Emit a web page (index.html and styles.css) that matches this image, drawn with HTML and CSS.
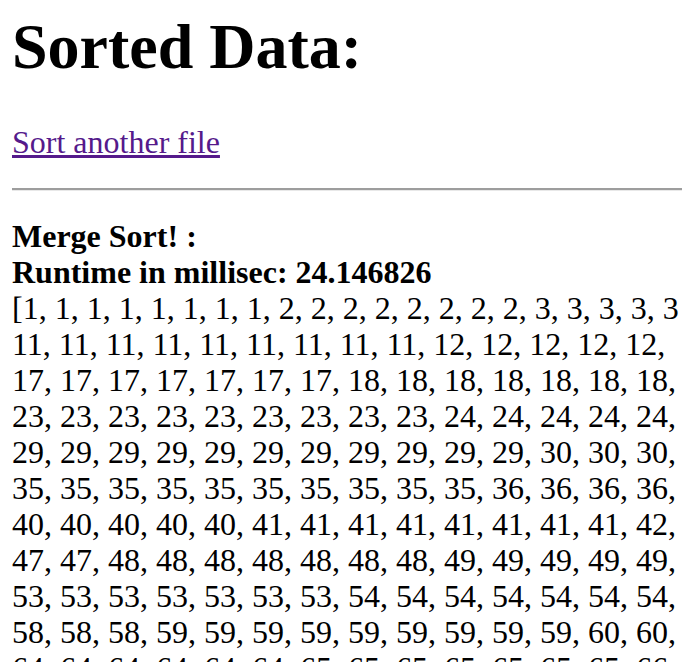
FILE: index.html
```html
<!DOCTYPE html>
<html lang="en">
<head>
<meta charset="utf-8">
<title>Sorted Data</title>
<link rel="stylesheet" href="styles.css">
</head>
<body>
<h1 class="title">Sorted Data:</h1>
<p class="back"><a class="back-link" href="#">Sort another file</a></p>
<hr class="rule">
<div class="result">
<b class="result-label">Merge Sort! :</b><br>
<b class="result-label">Runtime in millisec: 24.146826</b><br>
<div class="data">[1, 1, 1, 1, 1, 1, 1, 1, 2, 2, 2, 2, 2, 2, 2, 2, 3, 3, 3, 3, 3<br>11, 11, 11, 11, 11, 11, 11, 11, 11, 12, 12, 12, 12, 12,<br>17, 17, 17, 17, 17, 17, 17, 18, 18, 18, 18, 18, 18, 18,<br>23, 23, 23, 23, 23, 23, 23, 23, 23, 24, 24, 24, 24, 24,<br>29, 29, 29, 29, 29, 29, 29, 29, 29, 29, 29, 30, 30, 30,<br>35, 35, 35, 35, 35, 35, 35, 35, 35, 35, 36, 36, 36, 36,<br>40, 40, 40, 40, 40, 41, 41, 41, 41, 41, 41, 41, 41, 42,<br>47, 47, 48, 48, 48, 48, 48, 48, 48, 49, 49, 49, 49, 49,<br>53, 53, 53, 53, 53, 53, 53, 54, 54, 54, 54, 54, 54, 54,<br>58, 58, 58, 59, 59, 59, 59, 59, 59, 59, 59, 59, 60, 60,<br>64, 64, 64, 64, 64, 64, 65, 65, 65, 65, 65, 65, 65, 66,</div>
</div>
</body>
</html>
```

FILE: styles.css
```css
html {
  overflow: hidden;
  background: #ffffff;
}

body {
  margin: 0;
  padding: 0 0 0 12px;
  font-family: "Liberation Serif", "Times New Roman", serif;
  font-size: 32px;
  line-height: 36px;
  color: #000000;
}

.title {
  margin: 10px 0 0;
  font-size: 64px;
  line-height: 74px;
  font-weight: bold;
}

.back {
  margin: 40px 0 0;
}

.back-link {
  color: #551a8b;
  text-decoration: underline;
}

.rule {
  margin: 28px 0 0;
  height: 0;
  border: none;
  border-top: 2px solid #9d9d9d;
  border-bottom: 1px solid #e8e8e8;
}

.result {
  margin-top: 27px;
}

.result-label {
  font-weight: bold;
}

.data {
  white-space: nowrap;
}
```
